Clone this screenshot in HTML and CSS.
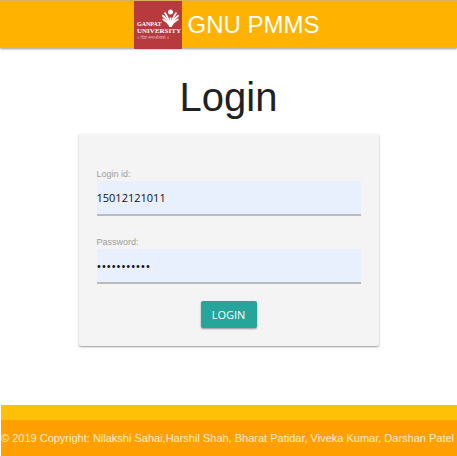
FILE: index.html
```html
<!DOCTYPE html>
<html lang="en">
<head>
<meta charset="utf-8">
<meta name="viewport" content="width=device-width, initial-scale=1">
<title>GNU PMMS</title>
<link rel="stylesheet" href="styles.css">
</head>
<body>
<header class="navbar">
  <a class="brand" href="#">
    <svg class="logo" viewBox="0 0 48 48" role="img" aria-label="Ganpat University">
      <rect width="48" height="48" fill="#b73a3e"/>
      <circle cx="36.500" cy="11" r="2.500" fill="#fff"/>
      <g fill="none" stroke="#fff" stroke-width="1.700">
        <path d="M36.500 25.500C35.500 20 33.500 15.500 30.600 11.500"/>
        <path d="M36.500 25.500C34.500 20.500 32 17 28.300 14.300"/>
        <path d="M36.500 25.500C34 22 31.500 19.500 28.600 18"/>
        <path d="M36.500 25.500C37.500 20 39.500 15.500 42.400 11.500"/>
        <path d="M36.500 25.500C38.500 20.500 41 17 44.700 14.300"/>
        <path d="M36.500 25.500C39 22 41.500 19.500 44.400 18"/>
        <path d="M36.500 25.500V16.500"/>
      </g>
      <text class="logo-name" x="3" y="25">GANPAT</text>
      <text class="logo-name logo-name-wide" x="3" y="32">UNIVERSITY</text>
      <text class="logo-motto" x="3" y="38">॥ विद्या समाजोत्कर्षः ॥</text>
    </svg>
    <span>GNU PMMS</span>
  </a>
</header>
<main class="content">
  <h1>Login</h1>
  <form class="card">
    <label for="login-id">Login id:</label>
    <input id="login-id" type="text" value="15012121011">
    <label for="password">Password:</label>
    <input id="password" type="password" value="15012121011">
    <button type="button">LOGIN</button>
  </form>
</main>
<footer class="footer">
  <p class="copyright">© 2019 Copyright: Nilakshi Sahai,Harshil Shah, Bharat Patidar, Viveka Kumar, Darshan Patel</p>
</footer>
</body>
</html>
```
FILE: styles.css
```css
* {
  box-sizing: border-box;
}

body {
  margin: 0;
  min-height: 100vh;
  display: flex;
  flex-direction: column;
  background: #fff;
  color: #212121;
  font-family: "Liberation Sans", Arial, sans-serif;
}

.navbar {
  display: flex;
  justify-content: center;
  height: 48px;
  border-top: 1px solid #dbb05c;
  background: #ffb300;
  box-shadow: 0 1px 2px rgba(0, 0, 0, 0.4);
}

.brand {
  display: flex;
  align-items: center;
  gap: 6px;
  padding-right: 4px;
  color: #fff;
  font-size: 24px;
  text-decoration: none;
}

.logo {
  width: 48px;
  height: 48px;
}

.logo-name {
  fill: #fff;
  font: bold 6px "Liberation Serif", serif;
}

.logo-name-wide {
  font-size: 7px;
}

.logo-motto {
  fill: #e5b5b6;
  font: 4px "Noto Sans", sans-serif;
}

.content {
  flex: 1;
}

h1 {
  margin: 26px 0 14px;
  font-size: 40px;
  font-weight: 400;
  line-height: 46px;
  text-align: center;
}

.card {
  display: flex;
  flex-direction: column;
  width: calc(100% - 157px);
  max-width: 480px;
  margin: 0 auto;
  padding: 33px 18px 18px;
  border-radius: 2px;
  background: #f4f4f4;
  box-shadow: 0 1px 2px rgba(0, 0, 0, 0.4);
}

label {
  color: #9e9e9e;
  font-size: 9px;
  line-height: 14px;
}

input {
  width: 100%;
  height: 35px;
  margin: 0 0 19px;
  padding: 0;
  border: 0;
  border-bottom: 2px solid #b9bbc0;
  border-radius: 0;
  background: #e8effd;
  color: #111;
  font: 11px "Open Sans", sans-serif;
  outline: 0;
}

input[type="password"] {
  font-size: 13px;
}

button {
  align-self: center;
  width: 56px;
  height: 27px;
  margin-top: -2px;
  padding: 0;
  border: 0;
  border-radius: 2px;
  background: #26a69a;
  box-shadow: 0 1px 2px rgba(0, 0, 0, 0.4);
  color: #fff;
  font: 11px "Open Sans", sans-serif;
}

.footer {
  margin-left: 1px;
  padding-top: 15px;
  background: #ffc107;
}

.copyright {
  margin: 0;
  background: #ffa000;
  color: #ffecce;
  font-size: 11px;
  line-height: 36px;
  white-space: nowrap;
}
```
